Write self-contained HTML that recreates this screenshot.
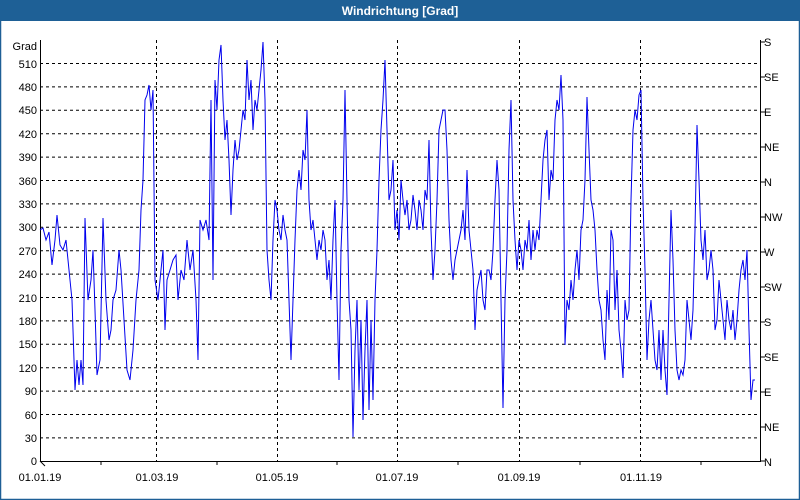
<!DOCTYPE html>
<html><head><style>
body{margin:0;width:800px;height:500px;overflow:hidden;background:#fff;font-family:"Liberation Sans",sans-serif;}
</style></head><body>
<svg width="800" height="500" xmlns="http://www.w3.org/2000/svg" style="position:absolute;left:0;top:0">
<rect x="0" y="0" width="800" height="500" fill="#fff"/>
<rect x="0.5" y="0.5" width="799" height="499" fill="none" stroke="#1e5f96" stroke-width="1.5"/>
<rect x="0" y="0" width="800" height="21" fill="#1e6096"/>
<text x="400" y="15" fill="#fff" font-size="12" font-weight="bold" text-anchor="middle">Windrichtung [Grad]</text>
<g stroke="#000" stroke-dasharray="3,3" stroke-width="1">
<line x1="40" x2="760" y1="63.5" y2="63.5"/><line x1="40" x2="760" y1="86.9" y2="86.9"/><line x1="40" x2="760" y1="110.3" y2="110.3"/><line x1="40" x2="760" y1="133.7" y2="133.7"/><line x1="40" x2="760" y1="157.1" y2="157.1"/><line x1="40" x2="760" y1="180.5" y2="180.5"/><line x1="40" x2="760" y1="203.9" y2="203.9"/><line x1="40" x2="760" y1="227.3" y2="227.3"/><line x1="40" x2="760" y1="250.7" y2="250.7"/><line x1="40" x2="760" y1="274.1" y2="274.1"/><line x1="40" x2="760" y1="297.5" y2="297.5"/><line x1="40" x2="760" y1="320.9" y2="320.9"/><line x1="40" x2="760" y1="344.3" y2="344.3"/><line x1="40" x2="760" y1="367.7" y2="367.7"/><line x1="40" x2="760" y1="391.1" y2="391.1"/><line x1="40" x2="760" y1="414.5" y2="414.5"/><line x1="40" x2="760" y1="437.9" y2="437.9"/>
<line x1="156.5" x2="156.5" y1="40" y2="461"/><line x1="277.5" x2="277.5" y1="40" y2="461"/><line x1="397.5" x2="397.5" y1="40" y2="461"/><line x1="519.5" x2="519.5" y1="40" y2="461"/><line x1="640.5" x2="640.5" y1="40" y2="461"/>
</g>
<path d="M40.5 40V461.5H760.5V40" fill="none" stroke="#000" stroke-width="1"/>
<g stroke="#000"><line x1="101" x2="101" y1="461" y2="465"/><line x1="217" x2="217" y1="461" y2="465"/><line x1="337" x2="337" y1="461" y2="465"/><line x1="458" x2="458" y1="461" y2="465"/><line x1="580" x2="580" y1="461" y2="465"/><line x1="701" x2="701" y1="461" y2="465"/>
<line x1="40" x2="45" y1="461" y2="466"/>
<line x1="760" x2="765" y1="42" y2="42"/><line x1="760" x2="765" y1="77" y2="77"/><line x1="760" x2="765" y1="112" y2="112"/><line x1="760" x2="765" y1="147" y2="147"/><line x1="760" x2="765" y1="182" y2="182"/><line x1="760" x2="765" y1="217" y2="217"/><line x1="760" x2="765" y1="252" y2="252"/><line x1="760" x2="765" y1="287" y2="287"/><line x1="760" x2="765" y1="322" y2="322"/><line x1="760" x2="765" y1="357" y2="357"/><line x1="760" x2="765" y1="392" y2="392"/><line x1="760" x2="765" y1="427" y2="427"/><line x1="760" x2="765" y1="461" y2="461"/></g>
<g font-size="11" fill="#000" text-anchor="end">
<text x="37" y="50">Grad</text><text x="37" y="68">510</text><text x="37" y="91">480</text><text x="37" y="114">450</text><text x="37" y="138">420</text><text x="37" y="161">390</text><text x="37" y="185">360</text><text x="37" y="208">330</text><text x="37" y="231">300</text><text x="37" y="255">270</text><text x="37" y="278">240</text><text x="37" y="302">210</text><text x="37" y="325">180</text><text x="37" y="348">150</text><text x="37" y="372">120</text><text x="37" y="395">90</text><text x="37" y="419">60</text><text x="37" y="442">30</text><text x="37" y="465">0</text>
</g>
<g font-size="11" fill="#000">
<text x="764" y="46">S</text><text x="764" y="81">SE</text><text x="764" y="116">E</text><text x="764" y="151">NE</text><text x="764" y="186">N</text><text x="764" y="221">NW</text><text x="764" y="256">W</text><text x="764" y="291">SW</text><text x="764" y="326">S</text><text x="764" y="361">SE</text><text x="764" y="396">E</text><text x="764" y="431">NE</text><text x="764" y="466">N</text>
</g>
<g font-size="11" fill="#000" text-anchor="middle">
<text x="40" y="481">01.01.19</text><text x="157" y="481">01.03.19</text><text x="277" y="481">01.05.19</text><text x="397" y="481">01.07.19</text><text x="519" y="481">01.09.19</text><text x="641" y="481">01.11.19</text>
</g>
<polyline fill="none" stroke="#0000ee" stroke-width="1" points="40,230 43,228 46,240 49,232 52,265 55,240 57,215 60,245 63,250 66,240 69,270 72,300 75,390 77,360 79,385 81,360 83,385 85,218 88,300 91,280 93,250 95,310 97,375 100,360 103,218 106,300 109,340 111,330 113,300 116,290 119,250 121,270 124,320 127,370 130,380 133,350 136,300 139,270 141,210 143,180 145,100 147,95 149,85 151,110 153,90 155,280 158,300 161,270 163,250 165,330 167,280 170,270 173,260 176,255 178,300 181,270 184,280 187,240 190,270 193,250 196,300 198,360 200,220 203,230 206,220 209,240 211,100 213,280 215,80 217,110 219,60 221,45 223,100 225,140 227,120 229,160 231,215 233,170 235,140 237,160 239,150 241,130 243,110 245,120 247,60 249,100 251,80 253,130 255,100 257,110 259,90 261,70 263,42 265,100 267,250 269,280 271,300 273,240 275,200 277,210 279,230 281,240 283,215 285,230 287,240 289,300 291,360 293,300 295,240 297,190 299,170 301,190 303,150 305,160 307,110 309,200 311,230 313,220 315,240 317,260 319,240 321,250 323,230 325,240 327,280 329,260 331,300 333,240 335,200 337,300 339,380 341,250 343,200 345,90 347,200 349,300 351,330 353,437 355,350 357,300 359,390 361,320 363,420 365,350 367,300 369,410 371,320 373,400 375,300 377,250 379,180 381,130 383,100 385,60 387,130 389,200 391,190 393,160 395,230 397,210 399,240 401,180 403,200 405,215 407,200 409,230 411,220 413,195 415,210 417,230 419,200 421,210 423,230 425,190 427,200 429,140 431,230 433,280 435,250 437,200 439,130 441,120 443,110 445,110 447,150 449,220 451,260 453,280 455,260 457,250 459,240 461,230 463,210 465,240 467,170 469,230 471,250 473,270 475,330 477,290 479,280 481,270 483,300 485,310 487,270 489,270 491,280 493,250 495,200 497,160 499,190 501,300 503,408 505,300 507,250 509,150 511,100 513,200 515,240 517,270 519,240 521,250 523,270 525,240 527,250 529,220 531,260 533,230 535,250 537,230 539,240 541,200 543,160 545,140 547,130 549,200 551,170 553,180 555,120 557,100 559,110 561,75 563,120 565,345 567,300 569,310 571,280 573,300 575,270 577,250 579,280 581,230 583,220 585,180 587,97 589,150 591,200 593,210 595,230 597,270 599,300 601,310 603,340 605,360 607,290 609,320 611,230 613,240 615,310 617,270 619,330 621,350 623,378 625,300 627,320 629,310 631,200 633,130 635,110 637,120 639,95 641,90 643,200 645,270 647,360 649,320 651,300 653,330 655,360 657,370 659,330 661,380 663,330 665,370 667,395 669,300 671,210 673,260 675,330 677,370 679,380 681,370 683,375 685,360 687,300 689,320 691,340 693,310 695,230 697,125 699,180 701,240 703,260 705,230 707,280 709,270 711,250 713,270 715,330 717,320 719,280 721,300 723,320 725,340 727,300 729,320 731,330 733,310 735,340 737,320 739,290 741,270 743,260 745,280 747,250 749,330 751,400 753,380 755,380"/>
</svg>
</body></html>
